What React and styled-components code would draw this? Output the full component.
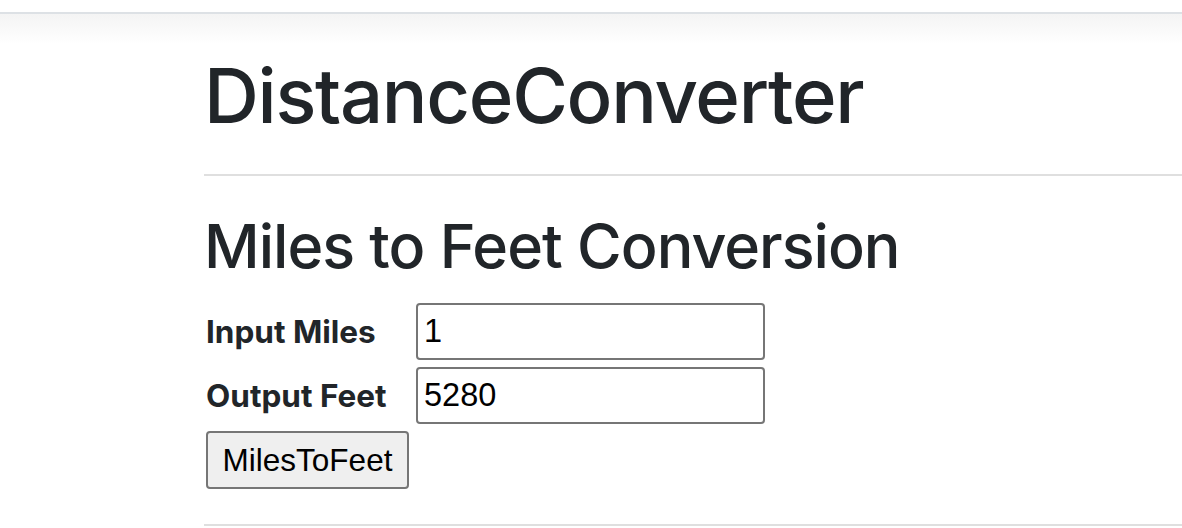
import styled, { createGlobalStyle } from "styled-components";
import { useState } from "react";

const GlobalStyle = createGlobalStyle`
  body {
    margin: 0;
    background: #fff;
    font-family: Inter, "Liberation Sans", sans-serif;
    color: #212529;
    overflow: hidden;
  }
`;

const App = () => {
  const [miles, setMiles] = useState("1");
  const [feet, setFeet] = useState("5280");

  const convert = () => {
    const n = parseFloat(miles);
    setFeet(isNaN(n) ? "" : String(Math.round(n * 5280 * 100) / 100));
  };

  return (
    <>
      <GlobalStyle />
      <TopBar />
      <StyledContainer>
        <StyledTitle>DistanceConverter</StyledTitle>
        <StyledRule />
        <StyledSubTitle>Miles to Feet Conversion</StyledSubTitle>
        <StyledForm>
          <StyledLabel htmlFor="miles">Input Miles</StyledLabel>
          <StyledInput id="miles" value={miles} onChange={(e) => setMiles(e.target.value)} />
          <StyledLabel htmlFor="feet">Output Feet</StyledLabel>
          <StyledInput id="feet" value={feet} readOnly />
          <StyledButton type="button" onClick={convert}>MilesToFeet</StyledButton>
        </StyledForm>
        <StyledRule $top="35px" />
      </StyledContainer>
    </>
  );
};

const TopBar = styled.div`
  margin-top: 12px;
  height: 30px;
  border-top: 2px solid #dde1e5;
  background: linear-gradient(#f4f4f4, #ffffff);
`;

const StyledContainer = styled.div`
  padding-left: 204px;
`;

const StyledTitle = styled.h1`
  margin: 6px 0 33px;
  font-size: 76px;
  font-weight: 500;
  line-height: 1.2;
  letter-spacing: -1.3px;
`;

const StyledRule = styled.hr`
  margin: ${(props) => props.$top || "0"} 0 0;
  border: 0;
  border-top: 2px solid #dfdfdf;
`;

const StyledSubTitle = styled.h2`
  margin: 34px 0 20px;
  font-size: 61px;
  font-weight: 500;
  line-height: 1.2;
  letter-spacing: -1px;
`;

const StyledForm = styled.div`
  display: grid;
  grid-template-columns: 212px 349px;
  row-gap: 7px;
  align-items: center;
`;

const StyledLabel = styled.label`
  padding-left: 2px;
  font-size: 31.5px;
  font-weight: 700;
`;

const StyledInput = styled.input`
  box-sizing: border-box;
  width: 349px;
  height: 57px;
  padding: 0 6px;
  border: 2px solid #767676;
  border-radius: 4px;
  font-family: "Liberation Sans", Arial, sans-serif;
  font-size: 32.5px;
  color: #000;
  outline: none;
`;

const StyledButton = styled.button`
  grid-column: 1;
  justify-self: start;
  box-sizing: border-box;
  margin-left: 2px;
  width: 203px;
  height: 58px;
  padding: 0;
  border: 2px solid #767676;
  border-radius: 4px;
  background: #efefef;
  font-family: "Liberation Sans", Arial, sans-serif;
  font-size: 31.5px;
  color: #000;
  cursor: pointer;
`;

export default App;
